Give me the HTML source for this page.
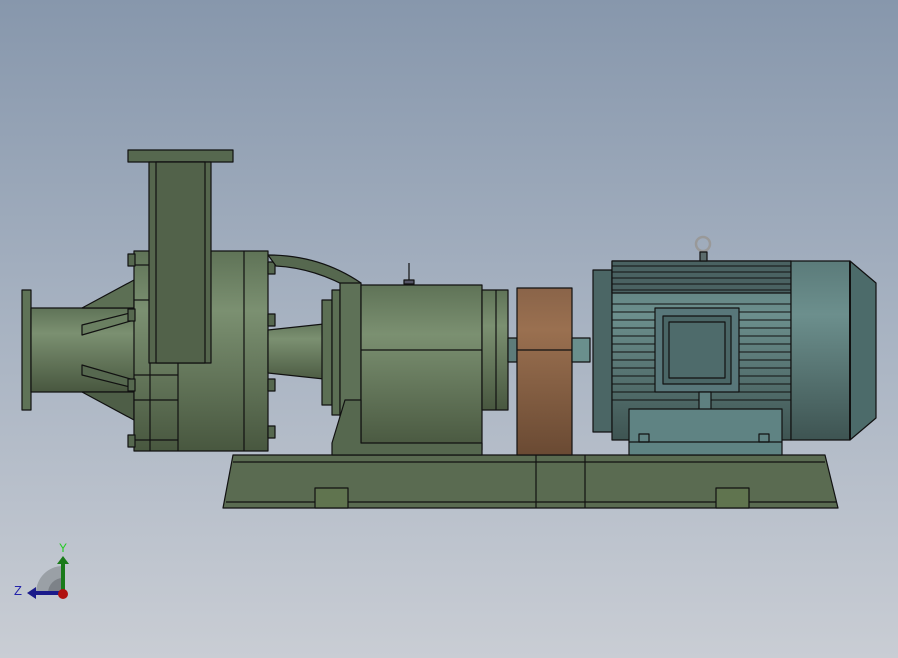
<!DOCTYPE html>
<html><head><meta charset="utf-8"><style>
html,body{margin:0;padding:0;width:898px;height:658px;overflow:hidden}
svg{display:block}
</style></head><body>
<svg width="898" height="658" viewBox="0 0 898 658" xmlns="http://www.w3.org/2000/svg">
<defs>
<linearGradient id="bg" x1="0" y1="0" x2="0" y2="1">
<stop offset="0" stop-color="#8797ac"/><stop offset="0.5" stop-color="#a8b3c2"/><stop offset="1" stop-color="#c9cdd4"/>
</linearGradient>
<linearGradient id="g" x1="0" y1="0" x2="0" y2="1">
<stop offset="0" stop-color="#5f7357"/><stop offset="0.3" stop-color="#7b9071"/><stop offset="1" stop-color="#48573f"/>
</linearGradient>
<linearGradient id="t" x1="0" y1="0" x2="0" y2="1">
<stop offset="0" stop-color="#5b7b7a"/><stop offset="0.3" stop-color="#6c8f8d"/><stop offset="1" stop-color="#3e5452"/>
</linearGradient>
<linearGradient id="b" x1="0" y1="0" x2="0" y2="1">
<stop offset="0" stop-color="#8a6449"/><stop offset="0.25" stop-color="#9a7050"/><stop offset="1" stop-color="#6a4a33"/>
</linearGradient>
</defs>
<rect width="898" height="658" fill="url(#bg)"/>
<g stroke="#111" stroke-width="1.2" stroke-linejoin="round">
<polygon points="233,455 825,455 838,508 223,508" fill="#5a6b51"/>
<line x1="233" y1="462" x2="825" y2="462"/>
<line x1="226" y1="502" x2="836" y2="502"/>
<line x1="536" y1="455" x2="536" y2="508"/><line x1="585" y1="455" x2="585" y2="508"/>
<rect x="315" y="488" width="33" height="20" fill="#60744f"/>
<rect x="716" y="488" width="33" height="20" fill="#60744f"/>
<rect x="22" y="290" width="9" height="120" fill="#5f7357"/>
<rect x="31" y="308" width="104" height="84" fill="url(#g)"/>
<polygon points="82,308 134,280 134,308" fill="#5c6f54"/>
<polygon points="82,392 134,420 134,392" fill="#4e5e47"/>
<polygon points="82,325 134,312 134,320 82,335" fill="#6a7f61"/>
<polygon points="82,365 134,380 134,388 82,375" fill="#56684f"/>
<rect x="134" y="251" width="134" height="200" fill="url(#g)"/>
<line x1="150" y1="251" x2="150" y2="451"/><line x1="178" y1="363" x2="178" y2="451"/><line x1="244" y1="251" x2="244" y2="451"/>
<line x1="134" y1="265" x2="150" y2="265"/><line x1="134" y1="300" x2="150" y2="300"/><line x1="134" y1="375" x2="178" y2="375"/><line x1="134" y1="400" x2="178" y2="400"/><line x1="134" y1="440" x2="178" y2="440"/>
<g fill="#56684f"><rect x="128" y="254" width="7" height="12"/><rect x="128" y="309" width="7" height="12"/><rect x="128" y="379" width="7" height="12"/><rect x="128" y="435" width="7" height="12"/>
<rect x="268" y="262" width="7" height="12"/><rect x="268" y="314" width="7" height="12"/><rect x="268" y="379" width="7" height="12"/><rect x="268" y="426" width="7" height="12"/></g>
<rect x="128" y="150" width="105" height="12" fill="#56684f"/>
<rect x="149" y="162" width="62" height="201" fill="#55664d"/>
<polygon points="156,162 205,162 205,363 156,363" fill="#52624a"/>
<path d="M268,255 Q320,255 361,283 L353,290 Q315,268 276,266 Z" fill="#56684f"/>
<polygon points="268,330 361,320 361,383 268,373" fill="url(#g)"/>
<rect x="322" y="300" width="10" height="105" fill="#5c6f54"/>
<rect x="332" y="290" width="8" height="125" fill="#5c6f54"/>
<polygon points="340,283 361,283 361,443 340,443" fill="#5e7157"/>
<rect x="361" y="285" width="121" height="165" fill="url(#g)"/>
<line x1="361" y1="350" x2="482" y2="350"/>
<polygon points="345,400 361,400 361,443 482,443 482,455 332,455 332,443" fill="#56684f"/>
<rect x="482" y="290" width="26" height="120" fill="url(#g)"/>
<line x1="496" y1="290" x2="496" y2="410"/>
<line x1="409" y1="263" x2="409" y2="282"/><rect x="404" y="280" width="10" height="4" fill="#556"/>
<rect x="508" y="338" width="9" height="24" fill="#5e7c7a"/>
<rect x="517" y="288" width="55" height="167" fill="url(#b)"/>
<line x1="517" y1="350" x2="572" y2="350"/>
<rect x="572" y="338" width="18" height="24" fill="#6a8f8d"/>
<rect x="593" y="270" width="19" height="162" fill="#4b6665"/>
<rect x="612" y="261" width="179" height="179" fill="url(#t)"/>
<rect x="612" y="261" width="179" height="32" fill="#4a6262"/>
<g stroke-width="1">
<line x1="612" y1="266" x2="791" y2="266"/><line x1="612" y1="272" x2="791" y2="272"/><line x1="612" y1="278" x2="791" y2="278"/><line x1="612" y1="284" x2="791" y2="284"/><line x1="612" y1="290" x2="791" y2="290"/>
<line x1="612" y1="304" x2="791" y2="304"/><line x1="612" y1="312" x2="791" y2="312"/><line x1="612" y1="320" x2="791" y2="320"/><line x1="612" y1="328" x2="791" y2="328"/><line x1="612" y1="336" x2="791" y2="336"/><line x1="612" y1="344" x2="791" y2="344"/><line x1="612" y1="352" x2="791" y2="352"/><line x1="612" y1="360" x2="791" y2="360"/><line x1="612" y1="368" x2="791" y2="368"/><line x1="612" y1="376" x2="791" y2="376"/><line x1="612" y1="384" x2="791" y2="384"/><line x1="612" y1="392" x2="791" y2="392"/><line x1="612" y1="400" x2="791" y2="400"/>
</g>
<rect x="655" y="308" width="84" height="84" fill="#58777a"/>
<rect x="663" y="316" width="68" height="68" fill="#4a6666"/>
<rect x="669" y="322" width="56" height="56" fill="#4e6b6b"/>
<rect x="699" y="392" width="12" height="50" fill="#5e8080"/>
<rect x="629" y="409" width="153" height="46" fill="#5f8383"/>
<line x1="629" y1="442" x2="782" y2="442"/>
<rect x="639" y="434" width="10" height="8" fill="none"/><rect x="759" y="434" width="10" height="8" fill="none"/>
<rect x="791" y="261" width="59" height="179" fill="url(#t)"/>
<polygon points="850,261 876,283 876,418 850,440" fill="#4c6b6a"/>
<line x1="850" y1="261" x2="850" y2="440" stroke-width="2"/>
<circle cx="703" cy="244" r="7" fill="none" stroke="#999" stroke-width="2.5"/>
<rect x="700" y="252" width="7" height="9" fill="#5b6b6b"/>
</g>
<path d="M36,593 A27,27 0 0 1 63,566 L63,593 Z" fill="#9aa0a6"/>
<path d="M48,593 A15,15 0 0 1 63,578 L63,593 Z" fill="#7d8288"/>
<rect x="61" y="562" width="4" height="30" fill="#1a7a1a"/><polygon points="57,564 63,556 69,564" fill="#1a7a1a"/>
<rect x="34" y="591" width="28" height="4" fill="#1a1a8a"/><polygon points="36,587 27,593 36,599" fill="#1a1a8a"/>
<circle cx="63" cy="594" r="5" fill="#b01010"/>
<text x="59" y="552" font-family="Liberation Sans, sans-serif" font-size="12" fill="#22cc22">Y</text>
<text x="14" y="595" font-family="Liberation Sans, sans-serif" font-size="13" fill="#2222aa">Z</text>
</svg>
</body></html>
